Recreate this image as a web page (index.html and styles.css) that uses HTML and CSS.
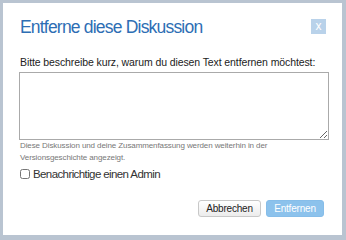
FILE: index.html
```html
<!DOCTYPE html>
<html lang="de">
<head>
<meta charset="UTF-8">
<title>Entferne diese Diskussion</title>
<link rel="stylesheet" href="styles.css">
</head>
<body>
<div class="dialog">
  <div class="head">
    <h2>Entferne diese Diskussion</h2>
    <span class="close">x</span>
  </div>

  <label class="label">Bitte beschreibe kurz, warum du diesen Text entfernen möchtest:</label>
  <textarea class="reason"></textarea>

  <p class="hint">Diese Diskussion und deine Zusammenfassung werden weiterhin in der Versionsgeschichte angezeigt.</p>

  <label class="check"><input type="checkbox"> Benachrichtige einen Admin</label>

  <div class="actions">
    <button class="button">Abbrechen</button>
    <button class="button primary">Entfernen</button>
  </div>
</div>
</body>
</html>
```

FILE: styles.css
```css
body {
  margin: 0;
  padding: 3px;
  background: #b9c4d1;
  font-family: 'Liberation Sans', Arial, sans-serif;
}

.dialog {
  width: 339px;
  height: 232px;
  box-sizing: border-box;
  background: #fff;
  padding: 16px 17px 0 17px;
}

.head {
  display: flex;
  justify-content: space-between;
  align-items: center;
  height: 15px;
}

h2 {
  margin: 1px 0 0 0;
  font-size: 17.5px;
  font-weight: normal;
  color: #2d6eb4;
  letter-spacing: -0.8px;
}

.close {
  width: 15px;
  height: 15px;
  margin-right: -1px;
  background: #b9d2ea;
  color: #fff;
  font-size: 12px;
  line-height: 14px;
  text-align: center;
}

.label {
  display: block;
  margin-top: 22px;
  font-size: 10.5px;
  letter-spacing: -0.1px;
  color: #222;
}

.reason {
  display: block;
  width: 310px;
  height: 68px;
  box-sizing: border-box;
  margin: 4px 0 0 -1px;
  border: 1px solid #aaa;
  resize: both;
}

.hint {
  margin: 0;
  width: 256px;
  font-size: 8px;
  line-height: 12px;
  letter-spacing: -0.1px;
  color: #777;
}

.check {
  display: flex;
  align-items: center;
  gap: 3px;
  margin-top: 4px;
  font-size: 11.5px;
  letter-spacing: -0.6px;
  color: #333;
}

.check input {
  margin: 0;
  width: 10px;
  height: 10px;
}

.actions {
  display: flex;
  justify-content: flex-end;
  gap: 5px;
  margin-top: 20px;
  padding-right: 1px;
}

.button {
  width: 63px;
  height: 17px;
  padding: 0;
  border: 1px solid #c8c8c8;
  border-radius: 3px;
  background: linear-gradient(#fff, #ececec);
  font-family: inherit;
  font-size: 10px;
  letter-spacing: -0.2px;
  color: #222;
}

.button.primary {
  width: 58px;
  border-color: #86bde9;
  background: #8cc2ec;
  color: #fff;
}
```
